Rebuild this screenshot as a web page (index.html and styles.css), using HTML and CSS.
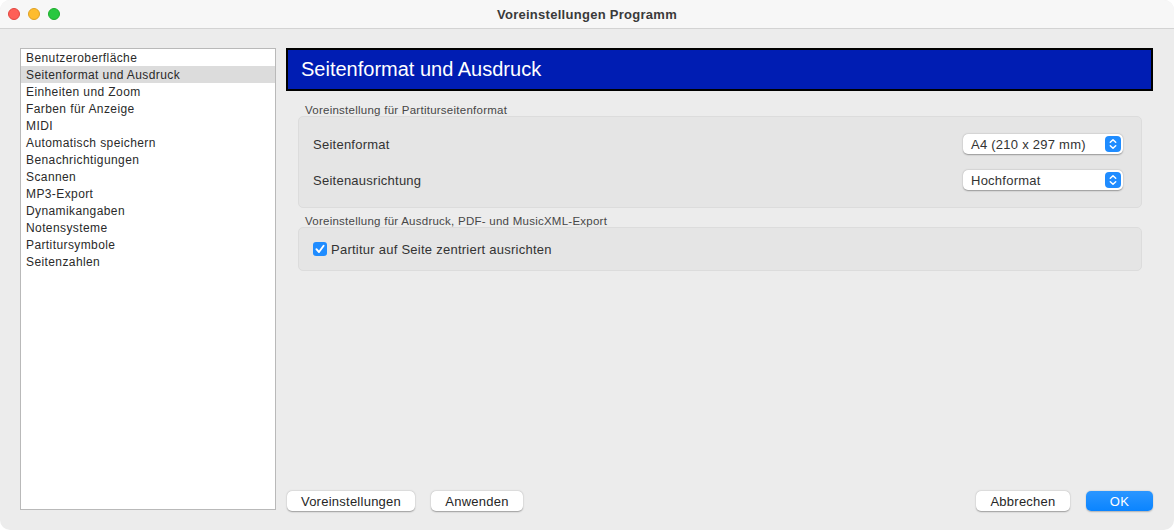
FILE: index.html
```html
<!DOCTYPE html>
<html lang="de">
<head>
<meta charset="utf-8">
<title>Voreinstellungen Programm</title>
<link rel="stylesheet" href="styles.css">
</head>
<body>
<div class="window">
  <div class="titlebar">
    <div class="lights">
      <span class="light red"></span>
      <span class="light yellow"></span>
      <span class="light green"></span>
    </div>
    <div class="title">Voreinstellungen Programm</div>
  </div>
  <div class="content">
    <ul class="sidebar">
      <li>Benutzeroberfläche</li>
      <li class="selected">Seitenformat und Ausdruck</li>
      <li>Einheiten und Zoom</li>
      <li>Farben für Anzeige</li>
      <li>MIDI</li>
      <li>Automatisch speichern</li>
      <li>Benachrichtigungen</li>
      <li>Scannen</li>
      <li>MP3-Export</li>
      <li>Dynamikangaben</li>
      <li>Notensysteme</li>
      <li>Partitursymbole</li>
      <li>Seitenzahlen</li>
    </ul>
    <div class="panel">
      <div class="header">Seitenformat und Ausdruck</div>
      <div class="groups">
        <div class="group-label">Voreinstellung für Partiturseitenformat</div>
        <div class="group group-rows">
          <div class="row">
            <span class="label">Seitenformat</span>
            <div class="popup">
              <span>A4 (210 x 297 mm)</span>
              <span class="stepper"><svg width="16" height="16" viewBox="0 0 16 16"><path d="M5.3 6.3 L8 3.8 L10.7 6.3" fill="none" stroke="#fff" stroke-width="1.5" stroke-linecap="round" stroke-linejoin="round"/><path d="M5.3 9.7 L8 12.2 L10.7 9.7" fill="none" stroke="#fff" stroke-width="1.5" stroke-linecap="round" stroke-linejoin="round"/></svg></span>
            </div>
          </div>
          <div class="row">
            <span class="label">Seitenausrichtung</span>
            <div class="popup">
              <span>Hochformat</span>
              <span class="stepper"><svg width="16" height="16" viewBox="0 0 16 16"><path d="M5.3 6.3 L8 3.8 L10.7 6.3" fill="none" stroke="#fff" stroke-width="1.5" stroke-linecap="round" stroke-linejoin="round"/><path d="M5.3 9.7 L8 12.2 L10.7 9.7" fill="none" stroke="#fff" stroke-width="1.5" stroke-linecap="round" stroke-linejoin="round"/></svg></span>
            </div>
          </div>
        </div>
        <div class="group-label">Voreinstellung für Ausdruck, PDF- und MusicXML-Export</div>
        <div class="group group-check">
          <label class="check">
            <span class="checkbox"><svg width="14" height="14" viewBox="0 0 14 14"><path d="M3.4 7.2 L6 10 L10.6 3.8" fill="none" stroke="#fff" stroke-width="1.9" stroke-linecap="round" stroke-linejoin="round"/></svg></span>
            <span class="label">Partitur auf Seite zentriert ausrichten</span>
          </label>
        </div>
      </div>
      <div class="buttons">
        <div class="btn-group">
          <button class="btn btn-wide">Voreinstellungen</button>
          <button class="btn btn-apply">Anwenden</button>
        </div>
        <div class="btn-group">
          <button class="btn btn-cancel">Abbrechen</button>
          <button class="btn btn-ok">OK</button>
        </div>
      </div>
    </div>
  </div>
</div>
</body>
</html>
```
FILE: styles.css
```css
* { box-sizing: border-box; }
html, body { margin: 0; padding: 0; background: #ffffff; }
body {
  font-family: "Liberation Sans", Arial, sans-serif;
  color: #262626;
  width: 1174px;
  height: 530px;
  overflow: hidden;
}
.window {
  width: 1174px;
  height: 530px;
  background: #ececec;
  border-radius: 10px;
  overflow: hidden;
  display: flex;
  flex-direction: column;
}
.titlebar {
  height: 29px;
  flex: none;
  background: #f7f7f7;
  border-bottom: 1px solid #d3d3d3;
  display: flex;
  align-items: center;
  position: relative;
}
.lights {
  display: flex;
  gap: 8px;
  padding-left: 8px;
  position: absolute;
  left: 0;
  top: 8px;
}
.light {
  width: 12px;
  height: 12px;
  border-radius: 50%;
  display: block;
}
.red { background: #fe5f57; border: 0.5px solid #e14640; }
.yellow { background: #febc2e; border: 0.5px solid #dfa123; }
.green { background: #28c840; border: 0.5px solid #1dad2b; }
.title {
  flex: 1;
  text-align: center;
  font-weight: bold;
  font-size: 13px;
  letter-spacing: 0.28px;
  color: #3a3a3a;
}
.content {
  flex: 1;
  display: flex;
  padding: 19px 21px 19px 20px;
  gap: 10px;
  min-height: 0;
}
.sidebar {
  list-style: none;
  margin: 0 0 1px 0;
  padding: 0;
  width: 256px;
  flex: none;
  background: #ffffff;
  border: 1px solid #b9b9b9;
  font-size: 12px;
  letter-spacing: 0.4px;
  color: #2a2a2a;
}
.sidebar li {
  height: 17px;
  line-height: 17px;
  padding-left: 5px;
  padding-top: 1px;
  white-space: nowrap;
}
.sidebar li.selected { background: #dcdcdc; }
.panel {
  flex: 1;
  display: flex;
  flex-direction: column;
}
.header {
  height: 43px;
  background: #001db3;
  border: 2px solid #000000;
  color: #ffffff;
  font-size: 20px;
  line-height: 39px;
  padding-left: 13px;
}
.groups {
  flex: 1;
  padding: 12px 11px 0 12px;
  display: flex;
  flex-direction: column;
}
.group-label {
  font-size: 11.5px;
  letter-spacing: 0.25px;
  color: #474747;
  height: 13px;
  line-height: 12px;
  padding-top: 1px;
  padding-left: 7px;
  white-space: nowrap;
}
.group {
  background: #e5e5e5;
  border: 1px solid #dcdcdc;
  border-radius: 5px;
}
.group-rows {
  height: 92px;
  padding: 17px 18px 0 14px;
  display: flex;
  flex-direction: column;
  gap: 16px;
  margin-bottom: 6px;
}
.row {
  display: flex;
  align-items: center;
  justify-content: space-between;
  height: 20px;
}
.label {
  font-size: 13px;
  letter-spacing: 0.25px;
  color: #333333;
  padding-top: 1px;
}
.popup {
  width: 160px;
  height: 20px;
  background: #ffffff;
  border-radius: 5px;
  box-shadow: 0 0.5px 1.5px rgba(0,0,0,0.35);
  display: flex;
  align-items: center;
  justify-content: space-between;
  padding: 0 2px 0 8px;
  font-size: 13px;
  letter-spacing: 0.25px;
  color: #333333;
}
.popup > span:first-child { padding-top: 1px; }
.stepper {
  width: 16px;
  height: 16px;
  border-radius: 4px;
  background: #1f8cff;
  display: flex;
}
.group-check {
  height: 44px;
  padding: 0 14px;
  display: flex;
  align-items: center;
}
.check {
  display: flex;
  align-items: center;
  gap: 4px;
}
.checkbox {
  width: 14px;
  height: 14px;
  border-radius: 3px;
  background: #1f8cff;
  display: flex;
}
.buttons {
  display: flex;
  justify-content: space-between;
  padding-left: 1px;
}
.btn-group { display: flex; gap: 16px; }
.btn {
  font-family: "Liberation Sans", Arial, sans-serif;
  font-size: 13px;
  letter-spacing: 0.25px;
  color: #262626;
  height: 20px;
  background: #ffffff;
  border: none;
  border-radius: 5px;
  box-shadow: 0 0.5px 1.5px rgba(0,0,0,0.35);
  padding: 1px 0 0 0;
  line-height: 19px;
}
.btn-wide { width: 128px; }
.btn-apply { width: 92px; }
.btn-cancel { width: 94px; }
.btn-ok {
  width: 67px;
  background: linear-gradient(#2b96ff, #0a84ff);
  color: #ffffff;
  box-shadow: 0 0.5px 1.5px rgba(0,0,0,0.25);
}
```
